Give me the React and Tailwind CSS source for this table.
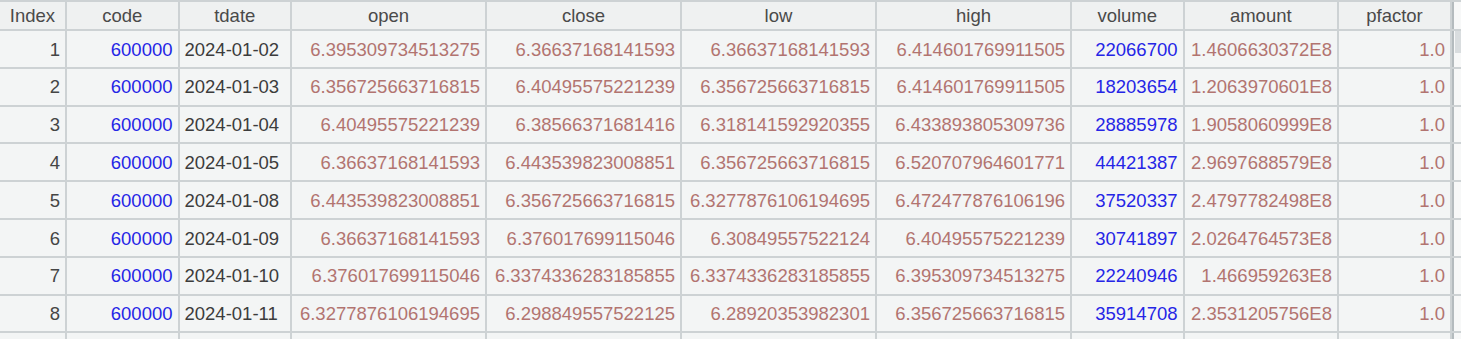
const columns = [
  { key: 'index', label: 'Index', width: 'w-[67px]' },
  { key: 'code', label: 'code', width: 'w-[112.5px]' },
  { key: 'tdate', label: 'tdate', width: 'w-[112.5px]' },
  { key: 'open', label: 'open', width: 'w-[195px]' },
  { key: 'close', label: 'close', width: 'w-[195px]' },
  { key: 'low', label: 'low', width: 'w-[195px]' },
  { key: 'high', label: 'high', width: 'w-[195px]' },
  { key: 'volume', label: 'volume', width: 'w-[112.5px]' },
  { key: 'amount', label: 'amount', width: 'w-[154.5px]' },
  { key: 'pfactor', label: 'pfactor', width: 'w-[113px]' },
];

const rows = [
  ['2024-01-02', '6.395309734513275', '6.36637168141593', '6.36637168141593', '6.414601769911505', '22066700', '1.4606630372E8'],
  ['2024-01-03', '6.356725663716815', '6.40495575221239', '6.356725663716815', '6.414601769911505', '18203654', '1.2063970601E8'],
  ['2024-01-04', '6.40495575221239', '6.38566371681416', '6.318141592920355', '6.433893805309736', '28885978', '1.9058060999E8'],
  ['2024-01-05', '6.36637168141593', '6.443539823008851', '6.356725663716815', '6.520707964601771', '44421387', '2.9697688579E8'],
  ['2024-01-08', '6.443539823008851', '6.356725663716815', '6.3277876106194695', '6.472477876106196', '37520337', '2.4797782498E8'],
  ['2024-01-09', '6.36637168141593', '6.376017699115046', '6.30849557522124', '6.40495575221239', '30741897', '2.0264764573E8'],
  ['2024-01-10', '6.376017699115046', '6.3374336283185855', '6.3374336283185855', '6.395309734513275', '22240946', '1.466959263E8'],
  ['2024-01-11', '6.3277876106194695', '6.298849557522125', '6.28920353982301', '6.356725663716815', '35914708', '2.3531205756E8'],
];

const cell = 'shrink-0 border-r-2 border-[#cdd2d4] px-[5px] flex items-center truncate';

function Row({ n, r, first }) {
  const [tdate, open, close, low, high, volume, amount] = r;
  const vals = [
    { v: n, cls: 'justify-end text-[#454545]' },
    { v: r.length ? '600000' : '', cls: 'justify-end text-[#2525e6]' },
    { v: tdate, cls: 'justify-start text-[#3c3c3c]' },
    { v: open, cls: 'justify-end text-[#b27470]' },
    { v: close, cls: 'justify-end text-[#b27470]' },
    { v: low, cls: 'justify-end text-[#b27470]' },
    { v: high, cls: 'justify-end text-[#b27470]' },
    { v: volume, cls: 'justify-end text-[#2525e6]' },
    { v: amount, cls: 'justify-end text-[#b27470]' },
    { v: r.length ? '1.0' : '', cls: 'justify-end text-[#b27470]' },
  ];
  return (
    <div className="flex h-[37.8px] border-b-2 border-[#cdd2d4] bg-[#f3f5f5]">
      {vals.map((c, i) => (
        <div key={i} className={`${cell} ${columns[i].width} ${c.cls} pt-[2px]`}>
          {c.v}
        </div>
      ))}
      <div className="flex-1 border-l-2 border-[#b4bbbe] bg-[#f7f8f8] pl-[1px]">
        {first && <div className="h-[22px] bg-[#d9dddf]" />}
      </div>
    </div>
  );
}

export default function App() {
  return (
    <div className="w-[1461px] h-[339px] overflow-hidden bg-[#f3f5f5] text-[18.5px] leading-none font-['Liberation_Sans',Arial,sans-serif]">
      <div className="flex h-[31px] border-t-2 border-b-2 border-[#cdd2d4] bg-[#eff1f1]">
        {columns.map((c) => (
          <div key={c.key} className={`${cell} ${c.width} justify-center text-[#4a4a4a] pt-[1px]`}>
            {c.label}
          </div>
        ))}
        <div className="flex-1 border-l-2 border-[#b4bbbe] bg-[#f7f8f8]" />
      </div>
      {rows.map((r, i) => (
        <Row key={i} n={i + 1} r={r} first={i === 0} />
      ))}
      <Row n="" r={[]} />
    </div>
  );
}
